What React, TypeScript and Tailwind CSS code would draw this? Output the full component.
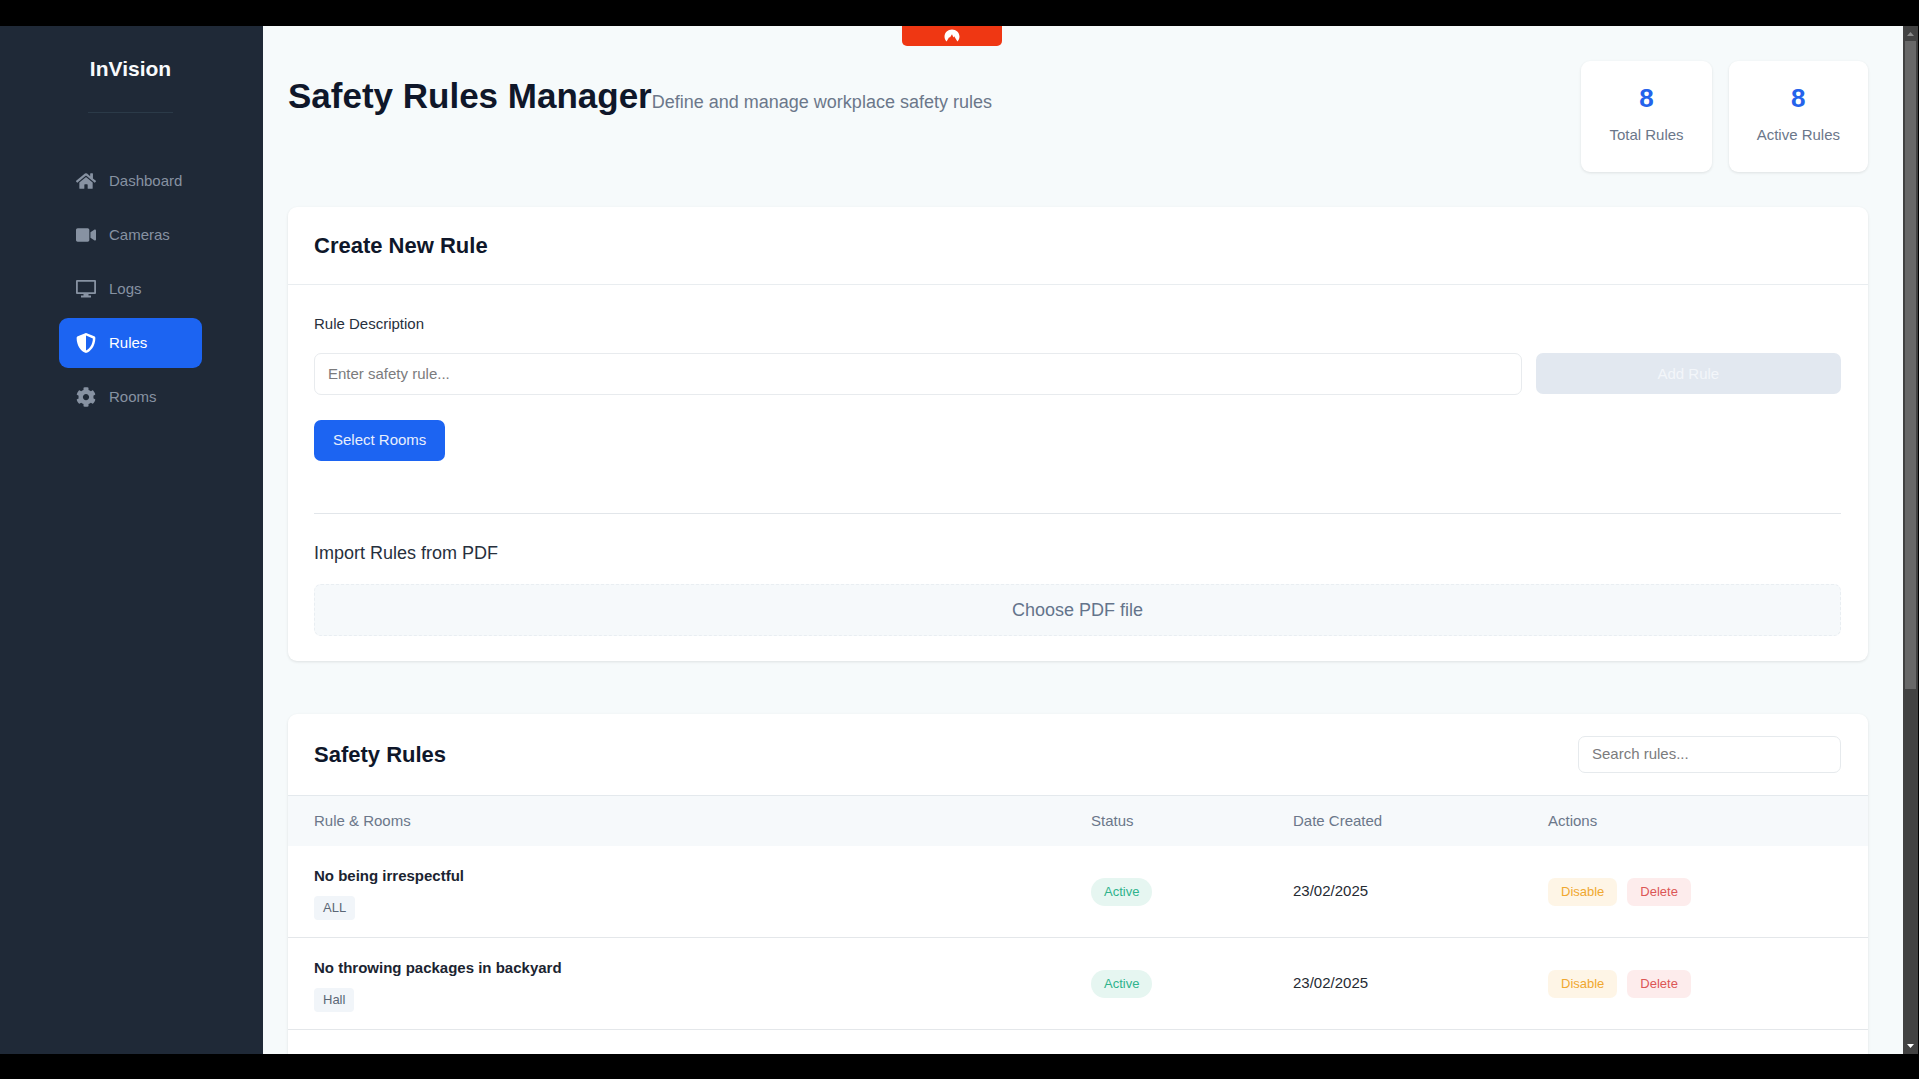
import { FaCog, FaHome, FaShieldAlt, FaVideo } from "react-icons/fa";

function MonitorIcon({ className }: { className?: string }) {
  return (
    <svg viewBox="0 0 20 20" className={className} fill="currentColor" aria-hidden="true">
      <path
        fillRule="evenodd"
        d="M1 1h18a1 1 0 0 1 1 1v12a1 1 0 0 1-1 1h-6.500v1.500H15V18.500H5v-2h2.500V15H1a1 1 0 0 1-1-1V2a1 1 0 0 1 1-1Zm.8 1.800v10.400h16.400V2.800Z"
      />
    </svg>
  );
}

const navItems = [
  { label: "Dashboard", icon: FaHome, active: false },
  { label: "Cameras", icon: FaVideo, active: false },
  { label: "Logs", icon: MonitorIcon, active: false },
  { label: "Rules", icon: FaShieldAlt, active: true },
  { label: "Rooms", icon: FaCog, active: false },
];

const stats = [
  { value: 8, label: "Total Rules" },
  { value: 8, label: "Active Rules" },
];

const rules = [
  { name: "No being irrespectful", room: "ALL", status: "Active", date: "23/02/2025" },
  { name: "No throwing packages in backyard", room: "Hall", status: "Active", date: "23/02/2025" },
];

function Sidebar() {
  return (
    <aside className="flex w-[263px] shrink-0 flex-col items-center bg-[#1f2937] pr-[2px]">
      <div className="mt-[23px] border-b border-[#2b3a48] px-px pb-[23px]">
        <span className="block px-px text-[21px] leading-[40px] font-bold text-[#f8fafc]">InVision</span>
      </div>
      <nav className="mt-[43px] flex w-[143px] flex-col gap-1">
        {navItems.map(({ label, icon: Icon, active }) => (
          <a
            key={label}
            href="#"
            aria-current={active ? "page" : undefined}
            className={
              active
                ? "flex h-[50px] items-center gap-[13px] rounded-[9px] bg-[#1c64f2] px-[17px] text-[15px] text-white"
                : "flex h-[50px] items-center gap-[13px] rounded-[9px] px-[17px] text-[15px] text-[#8792a2]"
            }
          >
            <Icon className="size-5 shrink-0" />
            {label}
          </a>
        ))}
      </nav>
    </aside>
  );
}

function PageHeader() {
  return (
    <header className="flex items-start justify-between">
      <div className="flex items-baseline">
        <h1 className="text-[35px] leading-[70px] font-bold text-[#0f172a]">Safety Rules Manager</h1>
        <p className="text-[18px] text-[#6b778a]">Define and manage workplace safety rules</p>
      </div>
      <div className="flex gap-[17px]">
        {stats.map((s) => (
          <div
            key={s.label}
            className="rounded-[9px] bg-white px-7 pt-[17px] pb-[25px] text-center shadow-[0_1px_3px_rgba(0,0,0,0.1)]"
          >
            <div className="text-[26px] leading-10 font-bold text-[#2563eb]">{s.value}</div>
            <div className="mt-[5px] text-[15px] leading-6 text-[#6b778a]">{s.label}</div>
          </div>
        ))}
      </div>
    </header>
  );
}

function CreateRule() {
  return (
    <section className="mt-[35px] rounded-[9px] bg-white shadow-[0_1px_3px_rgba(0,0,0,0.1)]">
      <div className="border-b border-[#e9edf0] px-[26px] py-[21px]">
        <h2 className="text-[22px] leading-[35px] font-bold text-[#0f172a]">Create New Rule</h2>
      </div>
      <div className="pt-[26px] pr-[27px] pb-[25px] pl-[26px]">
        <label htmlFor="rule" className="block text-[15px] leading-[26px] text-[#27303d]">
          Rule Description
        </label>
        <div className="mt-4 flex items-start gap-[14px]">
          <input
            id="rule"
            type="text"
            placeholder="Enter safety rule..."
            className="h-[42px] min-w-0 flex-1 rounded-[7px] border border-[#e8ebee] bg-white px-[13px] pb-[2px] text-[15px] placeholder:text-[#7b7b7d]"
          />
          <button
            disabled
            className="h-[41px] w-1/5 rounded-[7px] bg-[#e2e8f0] pt-[2px] text-[15px] text-[#f3f6fa]"
          >
            Add Rule
          </button>
        </div>
        <button className="mt-[25px] h-[41px] rounded-[7px] bg-[#1c64f2] px-[19px] text-[15px] text-[#e8effd]">
          Select Rooms
        </button>
        <div className="mt-[52px] border-t border-[#e2e6ea] pt-[26px]">
          <h3 className="text-[18px] leading-[26px] text-[#27303d]">Import Rules from PDF</h3>
          <label className="relative mt-[18px] flex h-[52px] cursor-pointer items-center justify-center rounded-[7px] border border-dashed border-[#e9eef2] bg-[#f6f9fb] text-[18px] text-[#64748b]">
            <input type="file" accept="application/pdf" className="sr-only" />
            Choose PDF file
          </label>
        </div>
      </div>
    </section>
  );
}

function RulesTable() {
  return (
    <section className="mt-[53px] min-h-[400px] rounded-[9px] bg-white shadow-[0_1px_3px_rgba(0,0,0,0.1)]">
      <div className="flex items-center justify-between border-b border-[#e4e9ed] py-[22px] pr-[27px] pl-[26px]">
        <h2 className="text-[22px] leading-9 font-bold text-[#0f172a]">Safety Rules</h2>
        <input
          type="search"
          aria-label="Search rules"
          placeholder="Search rules..."
          className="h-[37px] w-[263px] rounded-[7px] border border-[#e6eaed] bg-white px-[13px] pb-[2px] text-[15px] placeholder:text-[#7b7b7d]"
        />
      </div>
      <table className="w-full table-fixed border-separate border-spacing-0 text-left text-[15px]">
        <thead>
          <tr className="h-[50px] bg-[#f6f9fb] text-[#6b778a]">
            <th className="px-[26px] font-normal">Rule &amp; Rooms</th>
            <th className="w-[202px] px-[26px] font-normal">Status</th>
            <th className="w-[255px] px-[26px] font-normal">Date Created</th>
            <th className="w-[346px] px-[26px] font-normal">Actions</th>
          </tr>
        </thead>
        <tbody>
          {rules.map((r) => (
            <tr key={r.name} className="h-[92px] *:border-b *:border-[#e4e7ea]">
              <td className="px-[26px]">
                <div className="leading-6 font-bold text-[#1b2431]">{r.name}</div>
                <span className="mt-2 inline-block rounded bg-[#f1f5f9] px-[9px] text-[13px] leading-6 text-[#5b6776]">
                  {r.room}
                </span>
              </td>
              <td className="px-[26px]">
                <span className="inline-block rounded-full bg-[#e6f6f1] px-[13px] text-[13px] leading-7 text-[#2fb38c]">
                  {r.status}
                </span>
              </td>
              <td className="px-[26px] text-[#262b33]">{r.date}</td>
              <td className="px-[26px]">
                <div className="flex gap-[10px]">
                  <button className="h-7 rounded-[7px] bg-[#fef5e6] px-[13px] text-[13px] text-[#f0a830]">
                    Disable
                  </button>
                  <button className="h-7 rounded-[7px] bg-[#fdecec] px-[13px] text-[13px] text-[#dc5656]">
                    Delete
                  </button>
                </div>
              </td>
            </tr>
          ))}
        </tbody>
      </table>
    </section>
  );
}

function ScrollTrack() {
  return (
    <div className="flex w-[15px] shrink-0 flex-col items-center bg-[#424242]" aria-hidden="true">
      <svg viewBox="0 0 15 15" className="size-[15px] shrink-0" fill="#8b8b8b">
        <path d="M4 10 7.500 6 11 10Z" />
      </svg>
      <div className="h-[63%] w-[11px] bg-[#686868]" />
      <svg viewBox="0 0 15 15" className="mt-auto size-[15px] shrink-0" fill="#ffffff">
        <path d="M4 5 7.500 9 11 5Z" />
      </svg>
    </div>
  );
}

function RecorderTab() {
  return (
    <div className="absolute top-0 left-1/2 flex h-5 w-[100px] -translate-x-1/2 justify-center rounded-b-[5px] bg-[#ef3713] pt-[3px]">
      <svg viewBox="0 0 16 13" className="h-[13px] w-4" fill="#ffffff" aria-hidden="true">
        <path d="M2.600 12.600C1.300 11.200.500 9.500.500 7.600.500 3.600 3.900.500 8 .500s7.500 3.100 7.500 7.100c0 1.900-.8 3.600-2.100 5L10.200 7.300 9.400 8.600 8 5.200 5.800 8.800 5.200 8.100Z" />
      </svg>
    </div>
  );
}

export default function App() {
  return (
    <div className="flex h-screen overflow-hidden bg-black pt-[26px] pr-px pb-[25px] font-['Liberation_Sans',Arial,sans-serif]">
      <div className="relative flex min-w-0 flex-1 overflow-hidden">
        <Sidebar />
        <main className="min-w-0 flex-1 overflow-hidden bg-[#f6fafb] pt-[35px] pr-[35px] pl-[25px]">
          <PageHeader />
          <CreateRule />
          <RulesTable />
        </main>
        <RecorderTab />
      </div>
      <ScrollTrack />
    </div>
  );
}
